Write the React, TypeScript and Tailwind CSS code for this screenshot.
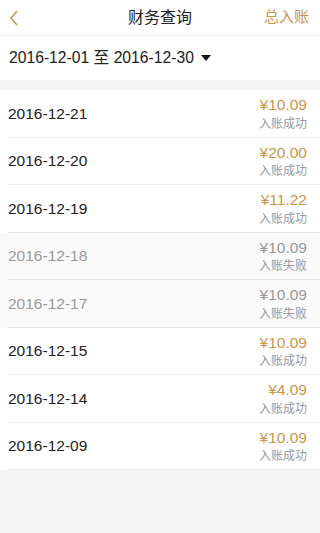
import React from "react";

type Record = { date: string; amount: string; ok: boolean };

const records: Record[] = [
  { date: "2016-12-21", amount: "¥10.09", ok: true },
  { date: "2016-12-20", amount: "¥20.00", ok: true },
  { date: "2016-12-19", amount: "¥11.22", ok: true },
  { date: "2016-12-18", amount: "¥10.09", ok: false },
  { date: "2016-12-17", amount: "¥10.09", ok: false },
  { date: "2016-12-15", amount: "¥10.09", ok: true },
  { date: "2016-12-14", amount: "¥4.09", ok: true },
  { date: "2016-12-09", amount: "¥10.09", ok: true },
];

export default function App() {
  return (
    <div className="min-h-[533px] bg-[#f5f5f5] flex flex-col font-['Liberation_Sans','Noto_Sans_CJK_SC',sans-serif]">
      {/* Header */}
      <div className="h-[36px] bg-white border-b border-[#ececec] flex items-center justify-between px-2 relative">
        <svg width="10" height="16" viewBox="0 0 10 16" className="ml-[1px]">
          <path d="M8 1 L2 8 L8 15" fill="none" stroke="#c9964f" strokeWidth="1.6" />
        </svg>
        <h1 className="absolute left-0 right-0 text-center text-[16px] text-[#222] pointer-events-none">财务查询</h1>
        <span className="text-[15px] text-[#c9964f] mr-[3px]">总入账</span>
      </div>

      {/* Date filter */}
      <div className="h-[44px] bg-white flex items-center pl-[9px]">
        <span className="text-[15.7px] text-[#222]">2016-12-01 至 2016-12-30</span>
        <svg width="10" height="6" viewBox="0 0 10 6" className="ml-[7px]">
          <path d="M0 0 H10 L5 6 Z" fill="#111" />
        </svg>
      </div>

      <div className="h-[10px]" />

      {/* List */}
      <div className="flex flex-col">
        {records.map((r) => (
          <div
            key={r.date}
            className={`h-[47.5px] pl-2 ${r.ok ? "bg-white" : "bg-[#fafafa]"}`}
          >
            <div className="h-full border-b border-[#ececec] flex items-center justify-between pr-[13px]">
              <span className={`text-[15.5px] ${r.ok ? "text-[#222]" : "text-[#999]"}`}>{r.date}</span>
              <div className="flex flex-col items-end leading-none">
                <span className={`text-[15.5px] ${r.ok ? "text-[#c9964f]" : "text-[#999]"}`}>{r.amount}</span>
                <span className="text-[12px] text-[#999] mt-[5px]">{r.ok ? "入账成功" : "入账失败"}</span>
              </div>
            </div>
          </div>
        ))}
      </div>
    </div>
  );
}
